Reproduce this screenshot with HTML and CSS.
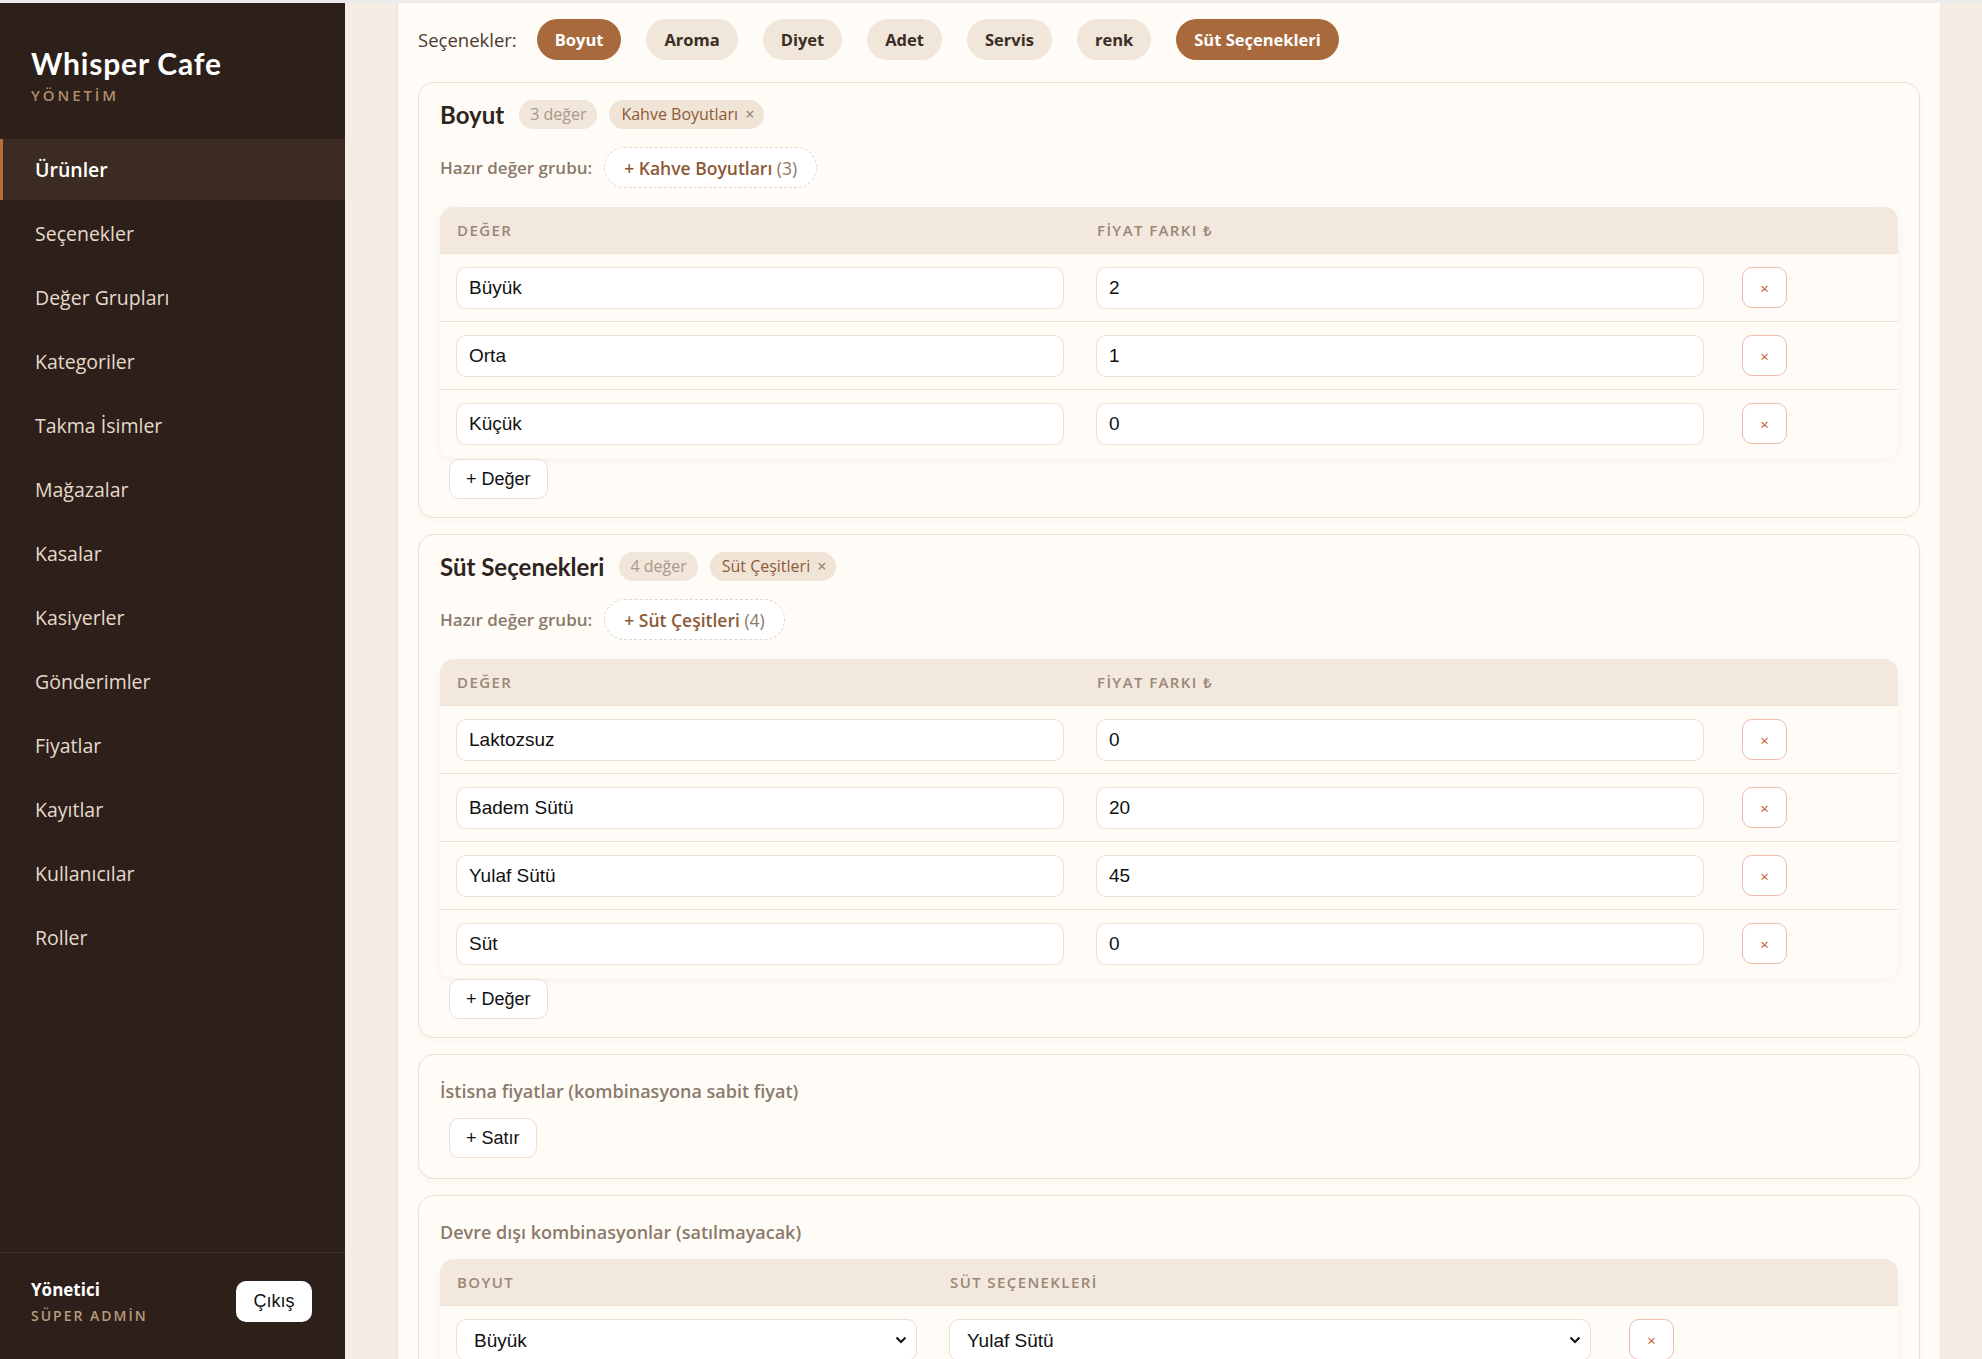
FILE: index.html
```html
<!DOCTYPE html>
<html lang="tr">
<head>
  <meta charset="UTF-8">
  <meta name="viewport" content="width=device-width,initial-scale=1">
  <title>Whisper Cafe · Yönetim</title>
  <link rel="stylesheet" href="styles.css">
</head>
<body>
  <div class="app">
    <aside class="sidebar">
      <div class="brand">
        <div class="brand-name">Whisper Cafe</div>
        <div class="brand-sub">YÖNETİM</div>
      </div>
      <nav class="nav">
        <a class="nav-item active">Ürünler</a>
        <a class="nav-item">Seçenekler</a>
        <a class="nav-item">Değer Grupları</a>
        <a class="nav-item">Kategoriler</a>
        <a class="nav-item">Takma İsimler</a>
        <a class="nav-item">Mağazalar</a>
        <a class="nav-item">Kasalar</a>
        <a class="nav-item">Kasiyerler</a>
        <a class="nav-item">Gönderimler</a>
        <a class="nav-item">Fiyatlar</a>
        <a class="nav-item">Kayıtlar</a>
        <a class="nav-item">Kullanıcılar</a>
        <a class="nav-item">Roller</a>
      </nav>
      <div class="user">
        <div>
          <div class="user-name">Yönetici</div>
          <div class="user-role">SÜPER ADMİN</div>
        </div>
        <button class="logout">Çıkış</button>
      </div>
    </aside>

    <main class="main">
      <div class="panel">
        <div class="option-tabs">
          <span class="tabs-label">Seçenekler:</span>
          <button class="pill active">Boyut</button>
          <button class="pill">Aroma</button>
          <button class="pill">Diyet</button>
          <button class="pill">Adet</button>
          <button class="pill">Servis</button>
          <button class="pill">renk</button>
          <button class="pill active">Süt Seçenekleri</button>
        </div>

        <!-- Boyut -->
        <section class="card">
          <div class="card-head">
            <h3 class="card-title">Boyut</h3>
            <span class="count">3 değer</span>
            <span class="tag">Kahve Boyutları <button class="tag-x">×</button></span>
          </div>
          <div class="preset-row">
            <span class="preset-label">Hazır değer grubu:</span>
            <button class="preset"><b>+ Kahve Boyutları</b> <span>(3)</span></button>
          </div>
          <div class="vtable">
            <div class="vrow vhead"><span>DEĞER</span><span>FİYAT FARKI ₺</span><span></span></div>
            <div class="vrow">
              <div class="cell"><input class="field" value="Büyük"></div>
              <div class="cell"><input class="field" value="2"></div>
              <div class="cell last"><button class="del">×</button></div>
            </div>
            <div class="vrow">
              <div class="cell"><input class="field" value="Orta"></div>
              <div class="cell"><input class="field" value="1"></div>
              <div class="cell last"><button class="del">×</button></div>
            </div>
            <div class="vrow">
              <div class="cell"><input class="field" value="Küçük"></div>
              <div class="cell"><input class="field" value="0"></div>
              <div class="cell last"><button class="del">×</button></div>
            </div>
          </div>
          <button class="add-btn">+ Değer</button>
        </section>

        <!-- Süt Seçenekleri -->
        <section class="card">
          <div class="card-head">
            <h3 class="card-title">Süt Seçenekleri</h3>
            <span class="count">4 değer</span>
            <span class="tag">Süt Çeşitleri <button class="tag-x">×</button></span>
          </div>
          <div class="preset-row">
            <span class="preset-label">Hazır değer grubu:</span>
            <button class="preset"><b>+ Süt Çeşitleri</b> <span>(4)</span></button>
          </div>
          <div class="vtable">
            <div class="vrow vhead"><span>DEĞER</span><span>FİYAT FARKI ₺</span><span></span></div>
            <div class="vrow">
              <div class="cell"><input class="field" value="Laktozsuz"></div>
              <div class="cell"><input class="field" value="0"></div>
              <div class="cell last"><button class="del">×</button></div>
            </div>
            <div class="vrow">
              <div class="cell"><input class="field" value="Badem Sütü"></div>
              <div class="cell"><input class="field" value="20"></div>
              <div class="cell last"><button class="del">×</button></div>
            </div>
            <div class="vrow">
              <div class="cell"><input class="field" value="Yulaf Sütü"></div>
              <div class="cell"><input class="field" value="45"></div>
              <div class="cell last"><button class="del">×</button></div>
            </div>
            <div class="vrow">
              <div class="cell"><input class="field" value="Süt"></div>
              <div class="cell"><input class="field" value="0"></div>
              <div class="cell last"><button class="del">×</button></div>
            </div>
          </div>
          <button class="add-btn">+ Değer</button>
        </section>

        <section class="card plain">
          <h4 class="section-title">İstisna fiyatlar (kombinasyona sabit fiyat)</h4>
          <button class="add-btn">+ Satır</button>
        </section>

        <section class="card plain">
          <h4 class="section-title">Devre dışı kombinasyonlar (satılmayacak)</h4>
          <div class="vtable combo">
            <div class="vrow vhead"><span>BOYUT</span><span>SÜT SEÇENEKLERİ</span><span></span></div>
            <div class="vrow">
              <div class="cell">
                <div class="select-wrap">
                  <select class="field select"><option>Büyük</option><option>Orta</option><option>Küçük</option></select>
                  <svg class="chev" width="12" height="8" viewBox="0 0 12 8"><path d="M1.5 1.5 6 6l4.5-4.5" fill="none" stroke="#111" stroke-width="2"/></svg>
                </div>
              </div>
              <div class="cell">
                <div class="select-wrap">
                  <select class="field select"><option>Yulaf Sütü</option><option>Laktozsuz</option><option>Badem Sütü</option><option>Süt</option></select>
                  <svg class="chev" width="12" height="8" viewBox="0 0 12 8"><path d="M1.5 1.5 6 6l4.5-4.5" fill="none" stroke="#111" stroke-width="2"/></svg>
                </div>
              </div>
              <div class="cell last"><button class="del">×</button></div>
            </div>
          </div>
        </section>
      </div>
    </main>
  </div>
</body>
</html>
```

FILE: styles.css
```css
:root {
  --side: #2d201a; --side-active: #3c2b22;
  --accent: #a8693c; --brown: #8c5a36;
  --bg: #f5ede4; --panel: #fffbf6; --card: #fffcf8;
  --line: #ebdfd1; --head: #f2e8dd; --chip: #f0e6da;
  --muted: #8b7a6a; --ink: #3a2d24;
}
* { box-sizing: border-box; }
html, body { margin: 0; height: 100%; }
body {
  font-family: "Open Sans", "Noto Sans", sans-serif;
  color: var(--ink);
  background: var(--bg);
  overflow: hidden;
}
button { font-family: inherit; cursor: pointer; }

.app {
  display: flex; height: 100vh;
  border-top: 3px solid #ebebeb;
}

/* sidebar */
.sidebar {
  width: 345px; flex-shrink: 0;
  background: var(--side);
  display: flex; flex-direction: column;
}
.brand { height: 136px; padding: 43px 31px 0; }
.brand-name {
  font-family: "Lato", sans-serif; font-weight: 700;
  font-size: 30px; line-height: 34px; letter-spacing: 0.8px; color: #fff;
}
.brand-sub {
  font-size: 15px; font-weight: 600; letter-spacing: 2.9px;
  color: #b08c6c; margin-top: 5px;
}
.nav { flex: 1; }
.nav-item {
  display: flex; align-items: center;
  height: 61px; margin-bottom: 3px;
  padding-left: 32px; border-left: 3px solid transparent;
  font-size: 19.5px; color: #e6d9cb;
}
.nav-item.active {
  background: var(--side-active); border-left-color: #b0703f;
  color: #fff; font-weight: 600;
}
.user {
  border-top: 1px solid #3e2f26;
  display: flex; align-items: center; justify-content: space-between;
  padding: 25px 33px 34px 31px;
}
.user-name { font-size: 17px; font-weight: 700; color: #fff; line-height: 24px; }
.user-role {
  font-size: 14px; font-weight: 600; letter-spacing: 2px;
  color: #b99a7c; margin-top: 4px;
}
.logout {
  width: 76px; height: 41px; border: none; border-radius: 10px;
  background: #fff; color: #111;
  font-family: "Liberation Sans", Arial, sans-serif; font-size: 18px;
}

/* main */
.main { flex: 1; padding: 0 41px 0 52px; overflow: hidden; }
.panel {
  min-height: 100%;
  background: var(--panel);
  border-left: 1px solid #ece2d6; border-right: 1px solid #f0e8de;
  padding: 16px 20px 0;
}
.option-tabs {
  display: flex; align-items: center; gap: 25px;
  margin-bottom: 22px;
}
.tabs-label { font-size: 18.5px; color: #4a3a2f; margin-right: -5px; }
.pill {
  height: 41px; padding: 0 18px; border: none; border-radius: 21px;
  background: var(--chip); color: var(--ink);
  font-size: 16.5px; font-weight: 700;
}
.pill.active { background: var(--accent); color: #fff; }

.card {
  background: var(--card);
  border: 1px solid var(--line); border-radius: 16px;
  padding: 17px 21px 18px;
  margin-bottom: 16px;
  box-shadow: 0 2px 6px rgba(120, 90, 60, 0.04);
}
.card.plain { padding-top: 24px; padding-bottom: 20px; }
.card-head { display: flex; align-items: center; gap: 12px; height: 29px; margin-bottom: 18px; }
.card-title {
  margin: 0 3px 0 0;
  font-family: "Lato", sans-serif; font-weight: 700; font-size: 24px;
  color: #2f241d;
}
.count {
  height: 29px; line-height: 29px; padding: 0 11px; border-radius: 15px;
  background: var(--chip); color: #a8998a; font-size: 16px;
}
.tag {
  height: 29px; line-height: 29px; padding: 0 10px 0 12px; border-radius: 15px;
  background: #f0e4d6; color: var(--brown); font-size: 16px;
}
.tag-x {
  border: none; background: none; padding: 0 0 0 3px;
  color: #8b7a6a; font-size: 16px;
}
.preset-row { display: flex; align-items: center; gap: 12px; margin-bottom: 19px; }
.preset-label { font-size: 17px; font-weight: 600; color: var(--muted); }
.preset {
  height: 41px; padding: 0 19px; border-radius: 21px;
  background: #fff; border: 1px dashed #e3d6c7;
  font-size: 17.5px; color: var(--muted);
}
.preset b { color: var(--brown); font-weight: 600; }

/* value tables */
.vtable {
  border-radius: 14px; overflow: hidden;
  background: #fffbf6;
  box-shadow: 0 3px 12px rgba(120, 90, 60, 0.07);
}
.vrow {
  display: grid; grid-template-columns: 1fr 1fr 178px;
  border-bottom: 1px solid var(--line);
}
.vrow:last-child { border-bottom: none; }
.combo .vrow { grid-template-columns: 493px 674px 1fr; }
.vhead {
  height: 47px; align-items: center;
  background: var(--head);
  font-size: 15px; font-weight: 600; letter-spacing: 1.4px; color: #9a8776;
}
.vhead span { padding-left: 17px; }
.cell { padding: 13px 16px 12px; }
.vrow:last-child .cell { padding-bottom: 13px; }
.cell.last { padding-left: 22px; }
.field {
  width: 100%; height: 42px;
  border: 1px solid #ecdfd0; border-radius: 10px;
  background: #fff; padding: 0 12px;
  font-family: "Liberation Sans", Arial, sans-serif; font-size: 19px; color: #111;
}
.del {
  width: 45px; height: 41px;
  border: 1px solid #efbcac; border-radius: 10px;
  background: #fff; color: #c8553a; font-size: 15px;
}
.select-wrap { position: relative; }
.select { appearance: none; padding-left: 17px; }
.chev { position: absolute; right: 10px; top: 17px; pointer-events: none; }

.add-btn {
  display: block; margin: 1px 0 0 9px;
  height: 40px; padding: 0 16px;
  border: 1px solid var(--line); border-radius: 10px; background: #fff;
  font-family: "Liberation Sans", Arial, sans-serif; font-size: 18px; color: #111;
}
.section-title {
  margin: 0 0 15px;
  font-size: 18px; font-weight: 600; line-height: 24px; color: var(--muted);
}
```
